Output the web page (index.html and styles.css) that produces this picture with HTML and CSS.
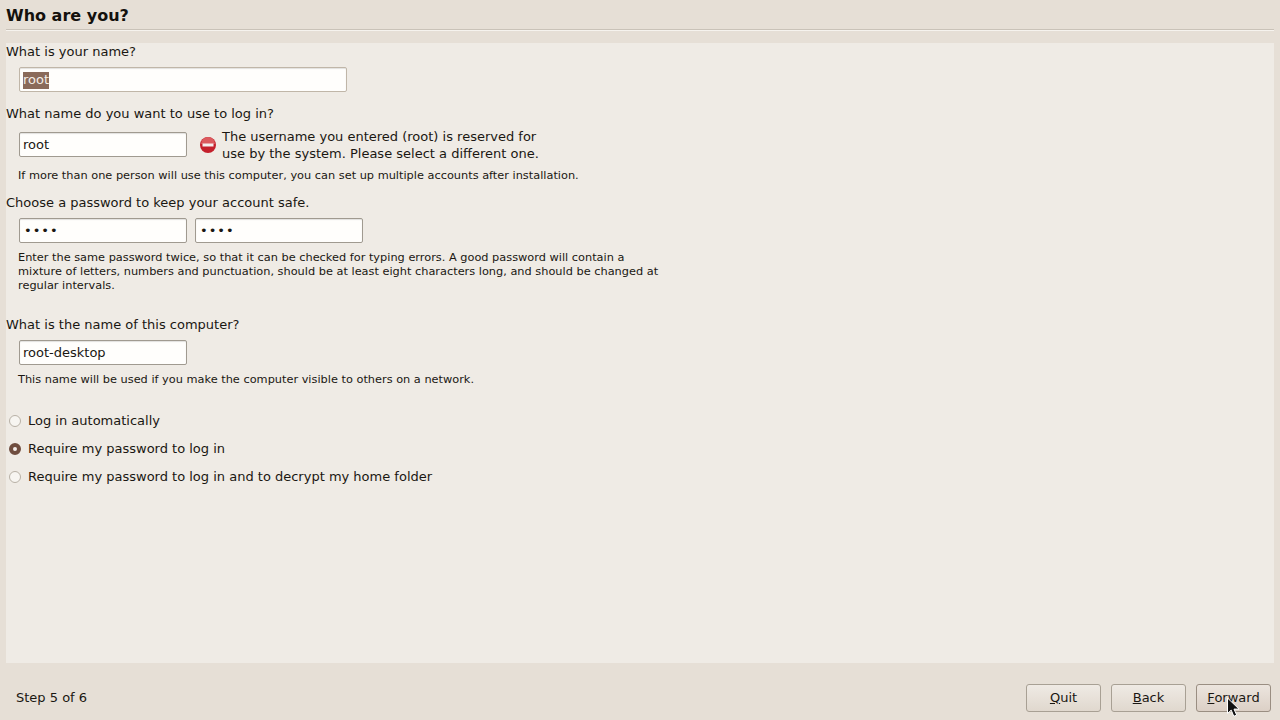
FILE: index.html
```html
<!DOCTYPE html>
<html lang="en">
<head>
  <meta charset="UTF-8">
  <title>Who are you?</title>
  <link rel="stylesheet" href="styles.css">
</head>
<body>
  <div class="window">
    <h1 class="title">Who are you?</h1>
    <div class="separator"></div>

    <div class="panel">
      <div class="question q-name">What is your name?</div>
      <div class="row">
        <div class="entry entry-wide"><span class="selected">root</span></div>
      </div>

      <div class="question q-login">What name do you want to use to log in?</div>
      <div class="row row-login">
        <div class="entry">root</div>
        <svg class="stop-icon" width="18" height="18" viewBox="0 0 18 18">
          <circle cx="9" cy="9" r="8" fill="#c4202c"/>
          <path d="M2 8a7 7 0 0 1 14 0z" fill="#dc5a5e"/>
          <rect x="3.5" y="7.5" width="11" height="3" fill="#f4eeee"/>
        </svg>
        <div class="error-text">The username you entered (root) is reserved for<br>use by the system. Please select a different one.</div>
      </div>
      <div class="hint hint-login">If more than one person will use this computer, you can set up multiple accounts after installation.</div>

      <div class="question q-password">Choose a password to keep your account safe.</div>
      <div class="row">
        <div class="entry dots">••••</div>
        <div class="entry dots">••••</div>
      </div>
      <div class="hint hint-password">Enter the same password twice, so that it can be checked for typing errors. A good password will contain a<br>mixture of letters, numbers and punctuation, should be at least eight characters long, and should be changed at<br>regular intervals.</div>

      <div class="question q-computer">What is the name of this computer?</div>
      <div class="row">
        <div class="entry">root-desktop</div>
      </div>
      <div class="hint hint-computer">This name will be used if you make the computer visible to others on a network.</div>

      <div class="radios">
        <div class="radio-row"><span class="radio"></span>Log in automatically</div>
        <div class="radio-row"><span class="radio checked"></span>Require my password to log in</div>
        <div class="radio-row"><span class="radio"></span>Require my password to log in and to decrypt my home folder</div>
      </div>
    </div>

    <div class="footer">
      <div class="step">Step 5 of 6</div>
      <div class="buttons">
        <div class="button"><span><u>Q</u>uit</span></div>
        <div class="button"><span><u>B</u>ack</span></div>
        <div class="button hover">
          <span><u>F</u>orward</span>
          <svg class="cursor" width="14" height="21" viewBox="0 0 14 21">
            <path d="M1.5 1v15.5l3.7-3.4 2.6 6.2 2.9-1.2-2.7-6h5z" fill="#111" stroke="#fff" stroke-width="1"/>
          </svg>
        </div>
      </div>
    </div>
  </div>
</body>
</html>
```

FILE: styles.css
```css
html, body {
  margin: 0;
  padding: 0;
}

body {
  width: 1280px;
  height: 720px;
  overflow: hidden;
  font-family: "DejaVu Sans", sans-serif;
  font-size: 13px;
  color: #1a1712;
  background-color: #e6dfd6;
}

.window {
  height: 720px;
  display: flex;
  flex-direction: column;
  padding: 0 6px;
  box-sizing: border-box;
}

.title {
  margin: 7px 0 0;
  font-size: 16px;
  line-height: 18px;
  font-weight: bold;
  color: #14110d;
}

.separator {
  margin: 4px 0 12px;
  height: 1px;
  background-color: #c9c2b8;
  border-bottom: 1px solid #f6f3ee;
}

.panel {
  height: 620px;
  background-color: #efebe5;
  overflow: hidden;
}

.question {
  padding-top: 1px;
  line-height: 16px;
  white-space: nowrap;
}

.q-name { margin-top: 0; }
.q-login { margin-top: 13px; }
.q-password { margin-top: 12px; }
.q-computer { margin-top: 24px; }

.row {
  display: flex;
  align-items: center;
  gap: 8px;
  margin: 7px 0 0 13px;
}

.entry {
  width: 168px;
  height: 25px;
  box-sizing: border-box;
  padding-left: 3px;
  line-height: 23px;
  background-color: #fffefc;
  border: 1px solid #a09a90;
  border-radius: 2px;
  box-shadow: inset 0 1px 1px rgba(0, 0, 0, 0.12);
}

.entry-wide {
  width: 328px;
  border-color: #c0b6a8;
}

.selected {
  display: inline-block;
  height: 17px;
  line-height: 16px;
  color: #f4eee8;
  background-color: #8a6a5a;
}

.dots {
  padding-left: 4px;
  letter-spacing: 1px;
}

.stop-icon {
  margin: 1px 0 0 4px;
  flex: none;
}

.error-text {
  margin: 1px 0 0 -3px;
  line-height: 17px;
  white-space: nowrap;
}

.row-login {
  margin-top: 5px;
}

.hint {
  margin-left: 12px;
  font-size: 11.33px;
  line-height: 14px;
  white-space: nowrap;
}

.hint-login { margin-top: 6px; }
.hint-password { margin-top: 7px; }
.hint-computer { margin-top: 7px; }

.radios {
  margin-top: 20px;
}

.radio-row {
  display: flex;
  align-items: center;
  height: 28px;
  padding-left: 3px;
}

.radio {
  width: 12px;
  height: 12px;
  margin: 1px 7px 0 0;
  box-sizing: border-box;
  background-color: #f7f5f1;
  border: 1px solid #b8b1a6;
  border-radius: 50%;
}

.radio.checked {
  background-color: #f4eeea;
  border: 4px solid #6f4d3f;
}

.footer {
  flex: 1;
  display: flex;
  align-items: center;
  justify-content: space-between;
  padding: 12px 3px 0 10px;
}

.buttons {
  display: flex;
  gap: 10px;
}

.button {
  position: relative;
  width: 75px;
  height: 28px;
  box-sizing: border-box;
  text-align: center;
  line-height: 26px;
  border: 1px solid #a8a094;
  border-radius: 3px;
  background: linear-gradient(#efeae4, #e0d8ce);
}

.button.hover {
  border-color: #9a8e82;
  background: linear-gradient(#ece5de, #dcd0c6);
}

.cursor {
  position: absolute;
  left: 29px;
  top: 12px;
}
```
